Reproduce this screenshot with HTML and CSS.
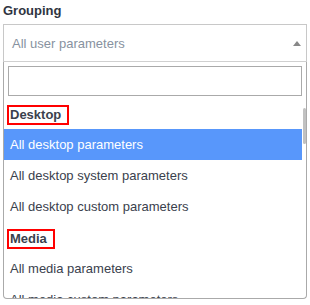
FILE: index.html
```html
<!DOCTYPE html>
<html>
  <head>
    <meta charset="utf-8" />
    <title>Grouping</title>
    <link rel="stylesheet" href="styles.css">
  </head>
  <body>
    <div class="field">
      <label class="field-label">Grouping</label>
      <div class="select-box">
        <span class="placeholder">All user parameters</span>
        <span class="arrow"></span>
      </div>
      <div class="dropdown">
        <div class="search">
          <input type="text" class="search-input">
        </div>
        <ul class="results">
          <li class="group"><span class="group-name">Desktop</span></li>
          <li class="option active">All desktop parameters</li>
          <li class="option">All desktop system parameters</li>
          <li class="option">All desktop custom parameters</li>
          <li class="group"><span class="group-name">Media</span></li>
          <li class="option">All media parameters</li>
          <li class="option">All media custom parameters</li>
          <li class="option">All media system parameters</li>
          <!-- fake thumb, the list itself does not scroll here -->
          <li class="thumb"></li>
        </ul>
      </div>
    </div>
  </body>
</html>
```

FILE: styles.css
```css
/* Grouping select, opened */
body {
  font-family: "Liberation Sans", Arial, sans-serif;
  font-size: 13px;
  background-color: #fff;
  margin: 0;
  padding: 0;
}
.field {
  margin: 0 3px;
  width: 304px;
}
.field-label {
  display: block;
  font-weight: bold;
  color: #2f3541;
  line-height: 15px;
  margin: 3px 0 6px 0;
}
.select-box {
  box-sizing: border-box;
  height: 38px;
  border: 1px solid #c8c8c8;
  border-bottom-color: #d0d0d0;
  display: flex;
  align-items: center;
  padding: 0 5px 0 8px;
}
.placeholder {
  flex: 1;
  color: #8792a0;
}
.arrow {
  width: 0;
  height: 0;
  border-style: solid;
  border-width: 0 4px 5px 4px;
  border-color: transparent transparent #888 transparent;
}
.dropdown {
  border: 1px solid #aaa;
  border-top: none;
  border-radius: 0 0 4px 4px;
}
.search {
  padding: 4px 4px 2px 4px;
}
.search-input {
  box-sizing: border-box;
  display: block;
  width: 100%;
  height: 30px;
  border: 1px solid #aaa;
  margin: 0;
  padding: 4px;
  outline: none;
}
.results {
  list-style: none;
  margin: 0;
  padding: 0 4px 0 0;
  height: 200px;
  overflow: hidden;
  position: relative;
}
.results li {
  height: 31px;
  line-height: 31px;
  white-space: nowrap;
  color: #3a414d;
}
.option {
  padding-left: 6px;
}
.option.active {
  background-color: #5897fb;
  color: #fff;
}
.group {
  padding-left: 3px;
}
.group-name {
  display: inline-block;
  font-weight: bold;
  line-height: 16px;
  border: 2px solid #f00;
  padding: 0 6px 0 1px;
  vertical-align: middle;
}
.results .thumb {
  position: absolute;
  top: 10px;
  right: 0;
  width: 3px;
  height: 36px;
  border-radius: 2px;
  background-color: #c1c1c1;
}
```
